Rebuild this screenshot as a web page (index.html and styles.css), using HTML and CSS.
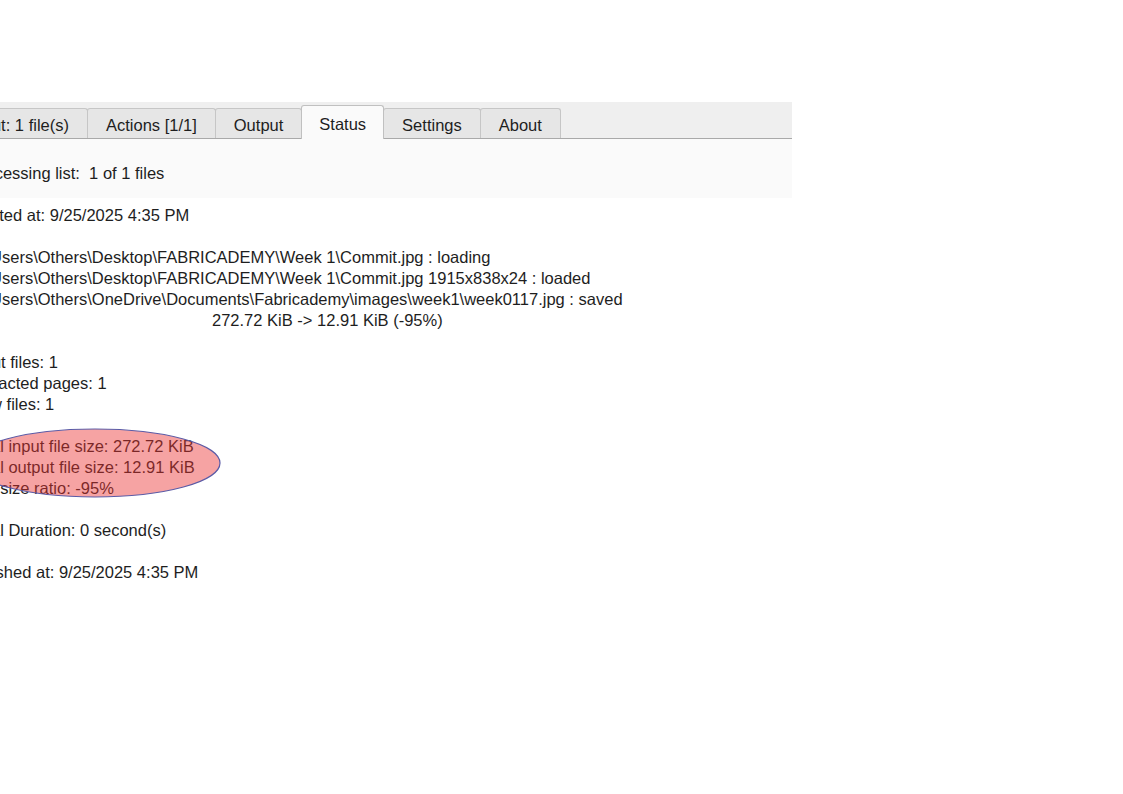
FILE: index.html
```html
<!DOCTYPE html>
<html lang="en">
<head>
    <meta charset="UTF-8">
    <title>Status</title>
    <link rel="stylesheet" href="styles.css">
</head>
<body>
    <div class="app">
        <div class="tabbar">
            <div class="tab first">Input: 1 file(s)</div>
            <div class="tab">Actions [1/1]</div>
            <div class="tab">Output</div>
            <div class="tab active">Status</div>
            <div class="tab">Settings</div>
            <div class="tab">About</div>
        </div>
        <div class="summary">Processing list:&nbsp; 1 of 1 files</div>
        <div class="log">
            <div class="line">Started at: 9/25/2025 4:35 PM</div>
            <div class="blank"></div>
            <div class="line">C:\Users\Others\Desktop\FABRICADEMY\Week 1\Commit.jpg : loading</div>
            <div class="line">C:\Users\Others\Desktop\FABRICADEMY\Week 1\Commit.jpg 1915x838x24 : loaded</div>
            <div class="line">C:\Users\Others\OneDrive\Documents\Fabricademy\images\week1\week0117.jpg : saved</div>
            <div class="line indent">272.72 KiB -&gt; 12.91 KiB (-95%)</div>
            <div class="blank"></div>
            <div class="line">Input files: 1</div>
            <div class="line">Extracted pages: 1</div>
            <div class="line">New files: 1</div>
            <div class="blank"></div>
            <div class="line">Total input file size: 272.72 KiB</div>
            <div class="line">Total output file size: 12.91 KiB</div>
            <div class="line">File size ratio: -95%</div>
            <div class="blank"></div>
            <div class="line">Total Duration: 0 second(s)</div>
            <div class="blank"></div>
            <div class="line">Finished at: 9/25/2025 4:35 PM</div>
        </div>
        <svg class="mark" width="260" height="74" viewBox="0 0 260 74">
            <ellipse cx="130" cy="37" rx="125" ry="34" fill="rgba(236, 50, 50, 0.45)" stroke="#5b5ba6" stroke-width="1.2"/>
        </svg>
    </div>
</body>
</html>
```

FILE: styles.css
```css
body {
    margin: 0;
    padding-top: 102px;
    background: #ffffff;
    overflow: hidden;
    font-family: 'Liberation Sans', Arial, sans-serif;
    font-size: 16.5px;
    color: #1e1e1e;
}
.app {
    position: relative;
    width: 824px;
    margin-left: -32px;
}
.tabbar {
    display: flex;
    align-items: flex-end;
    height: 36px;
    background: #efefef;
    border-bottom: 1px solid #a9a9a9;
}
.tab {
    height: 29px;
    line-height: 32px;
    padding: 0 18px;
    margin-left: -1px;
    background: #e6e6e6;
    border: 1px solid #c6c6c6;
    border-bottom: none;
    border-radius: 3px 3px 0 0;
    white-space: nowrap;
}
.tab.first {
    margin-left: -18px;
}
.tab.active {
    position: relative;
    height: 33px;
    line-height: 36px;
    padding: 0 17px;
    margin-bottom: -1px;
    background: #fafafa;
    border-color: #c0c0c0;
    z-index: 1;
}
.summary {
    height: 59px;
    box-sizing: border-box;
    padding: 24px 0 0 1px;
    line-height: 21px;
    background: #fafafa;
}
.log {
    padding: 7px 0 0 1px;
    line-height: 21px;
}
.line {
    white-space: nowrap;
}
.blank {
    height: 21px;
}
.indent {
    padding-left: 243px;
}
.mark {
    position: absolute;
    left: -3px;
    top: 324px;
}
```
